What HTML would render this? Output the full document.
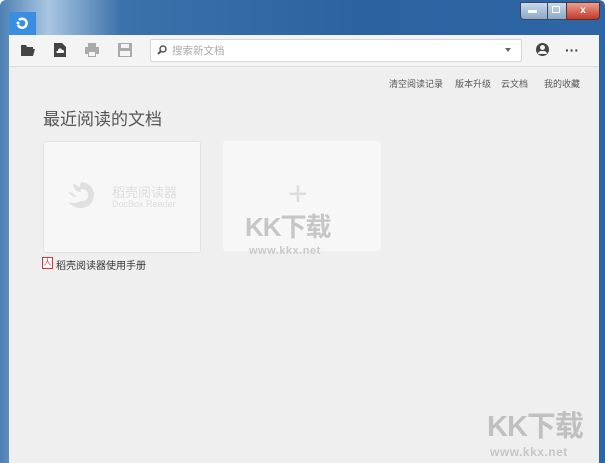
<!DOCTYPE html><html><head><meta charset="utf-8"><style>
body{margin:0;width:605px;height:463px;overflow:hidden;background:#fff;font-family:"Liberation Sans","Noto Sans CJK SC",sans-serif;position:relative}
.frame{position:absolute;left:0;top:0;width:605px;height:463px;background:linear-gradient(90deg,#4d80b4 0%,#a9c6e2 8%,#3c72ab 20%,#2b62a0 60%,#2e66a5 100%);border-radius:6px 6px 0 0}
.body{position:absolute;left:9px;top:35px;width:590px;height:428px;background:#efefef}
.tb{position:absolute;left:0;top:0;width:590px;height:31px;background:#f4f4f4;border-bottom:1px solid #dcdcdc}
.a{position:absolute;font-size:9px;color:#555;top:42px}
</style></head><body>
<div class="frame"></div>
<div style="position:absolute;left:9px;top:12px;width:27px;height:23px;background:#3a8ee2"></div>
<svg style="position:absolute;left:14px;top:16px" width="16" height="16" viewBox="0 0 16 16"><path d="M4 9a4.5 4.5 0 1 0 1-5" stroke="#fff" stroke-width="2.5" fill="none"/><circle cx="4" cy="7" r="1.5" fill="#fff"/></svg>
<div style="position:absolute;left:520px;top:2px;width:26px;height:16px;background:linear-gradient(#c8d8ea,#8aa8c8);border:1px solid #445;border-radius:0 0 0 4px"></div>
<div style="position:absolute;left:528px;top:10px;width:9px;height:3px;background:#fff"></div>
<div style="position:absolute;left:547px;top:2px;width:18px;height:16px;background:linear-gradient(#c8d8ea,#8aa8c8);border:1px solid #445"></div>
<div style="position:absolute;left:552px;top:6px;width:6px;height:5px;border:1.5px solid #fff"></div>
<div style="position:absolute;left:566px;top:2px;width:32px;height:16px;background:linear-gradient(#e8a090,#c6382a);border:1px solid #533;border-radius:0 0 4px 0;color:#fff;font-size:10px;font-weight:bold;text-align:center;line-height:15px">x</div>
<div class="body">
<div class="tb">
<svg style="position:absolute;left:12px;top:9px" width="14" height="12"><path d="M0 1h5l1 2h6v2H3L0 12z M3 5h11l-2 7H0z" fill="#444"/></svg>
<svg style="position:absolute;left:45px;top:8px" width="12" height="14"><path d="M0 0h8l4 4v10H0z" fill="#444"/><path d="M3 10h6a1.5 1.5 0 0 0-1-3a2 2 0 0 0-4 1a1 1 0 0 0-1 2z" fill="#fff"/></svg>
<svg style="position:absolute;left:76px;top:8px" width="14" height="14"><path d="M3 0h8v4H3z M0 4h14v7h-3v3H3v-3H0z" fill="#aaa"/><rect x="4" y="9" width="6" height="4" fill="#f4f4f4"/></svg>
<svg style="position:absolute;left:109px;top:8px" width="14" height="14"><path d="M0 0h14v14H0z" fill="#aaa"/><rect x="3" y="1" width="8" height="4" fill="#f4f4f4"/><rect x="2" y="8" width="10" height="5" fill="#f4f4f4"/></svg>
<div style="position:absolute;left:141px;top:4px;width:370px;height:21px;background:#fff;border:1px solid #d6d6d6;border-radius:2px"></div>
<svg style="position:absolute;left:148px;top:10px" width="10" height="10"><circle cx="6" cy="4" r="3" stroke="#555" stroke-width="1.5" fill="none"/><path d="M4 6L1 9" stroke="#555" stroke-width="2"/></svg>
<div style="position:absolute;left:163px;top:8px;font-size:10.5px;color:#aaa">搜索新文档</div>
<div style="position:absolute;left:496px;top:13px;border:3px solid transparent;border-top:4px solid #666"></div>
<div style="position:absolute;left:527px;top:8px;width:13px;height:13px;border-radius:50%;background:#444"></div>
<div style="position:absolute;left:531px;top:10px;width:5px;height:5px;border-radius:50%;background:#f4f4f4"></div>
<div style="position:absolute;left:529px;top:16px;width:9px;height:3px;border-radius:3px 3px 0 0;background:#f4f4f4"></div>
<div style="position:absolute;left:556px;top:7px;font-size:14px;color:#444;font-weight:bold">···</div>
</div>
<div class="a" style="left:380px">清空阅读记录</div>
<div class="a" style="left:446px">版本升级</div>
<div class="a" style="left:492px">云文档</div>
<div class="a" style="left:535px">我的收藏</div>
<div style="position:absolute;left:34px;top:70px;font-size:17px;color:#555">最近阅读的文档</div>
<div style="position:absolute;left:34px;top:106px;width:156px;height:110px;background:#f7f7f7;border:1px solid #e2e2e2;border-radius:3px"></div>
<svg style="position:absolute;left:58px;top:143px" width="40" height="34"><path d="M14 4a13 13 0 1 1 0 26c-6 0-10-3-13-6c5 2 9 1 13-1a6 6 0 1 0-3-10z" fill="#e0e0e0"/><path d="M6 6c4 0 8 4 8 8c-4 0-8-3-8-8z M2 14c3 0 6 2 7 5c-3 0-6-2-7-5z" fill="#e0e0e0"/></svg>
<div style="position:absolute;left:103px;top:147px;font-size:13px;color:#ddd">稻壳阅读器</div>
<div style="position:absolute;left:103px;top:164px;font-size:9px;color:#ddd">DocBox Reader</div>
<div style="position:absolute;left:214px;top:106px;width:158px;height:110px;background:#f7f7f7;border-radius:3px"></div>
<div style="position:absolute;left:279px;top:140px;font-size:34px;color:#ddd;font-weight:300">+</div>
<div style="position:absolute;left:236px;top:172px;font-size:26px;font-weight:bold;color:#c6c6c6;letter-spacing:-1px">KK下载</div>
<div style="position:absolute;left:240px;top:210px;font-size:11px;font-weight:bold;color:#c9c9c9;letter-spacing:.5px">www.kkx.net</div>
<div style="position:absolute;left:33px;top:222px;width:9px;height:10px;border:1px solid #d33;background:#fff;color:#d33;font-size:8px;line-height:10px;text-align:center">人</div>
<div style="position:absolute;left:47px;top:222px;font-size:10px;color:#333">稻壳阅读器使用手册</div>
<div style="position:absolute;left:478px;top:368px;font-size:29px;font-weight:bold;color:#c0c0c0;letter-spacing:-1px">KK下载</div>
<div style="position:absolute;left:481px;top:410px;font-size:12px;font-weight:bold;color:#c6c6c6;letter-spacing:.5px">www.kkx.net</div>
</div>
</body></html>
